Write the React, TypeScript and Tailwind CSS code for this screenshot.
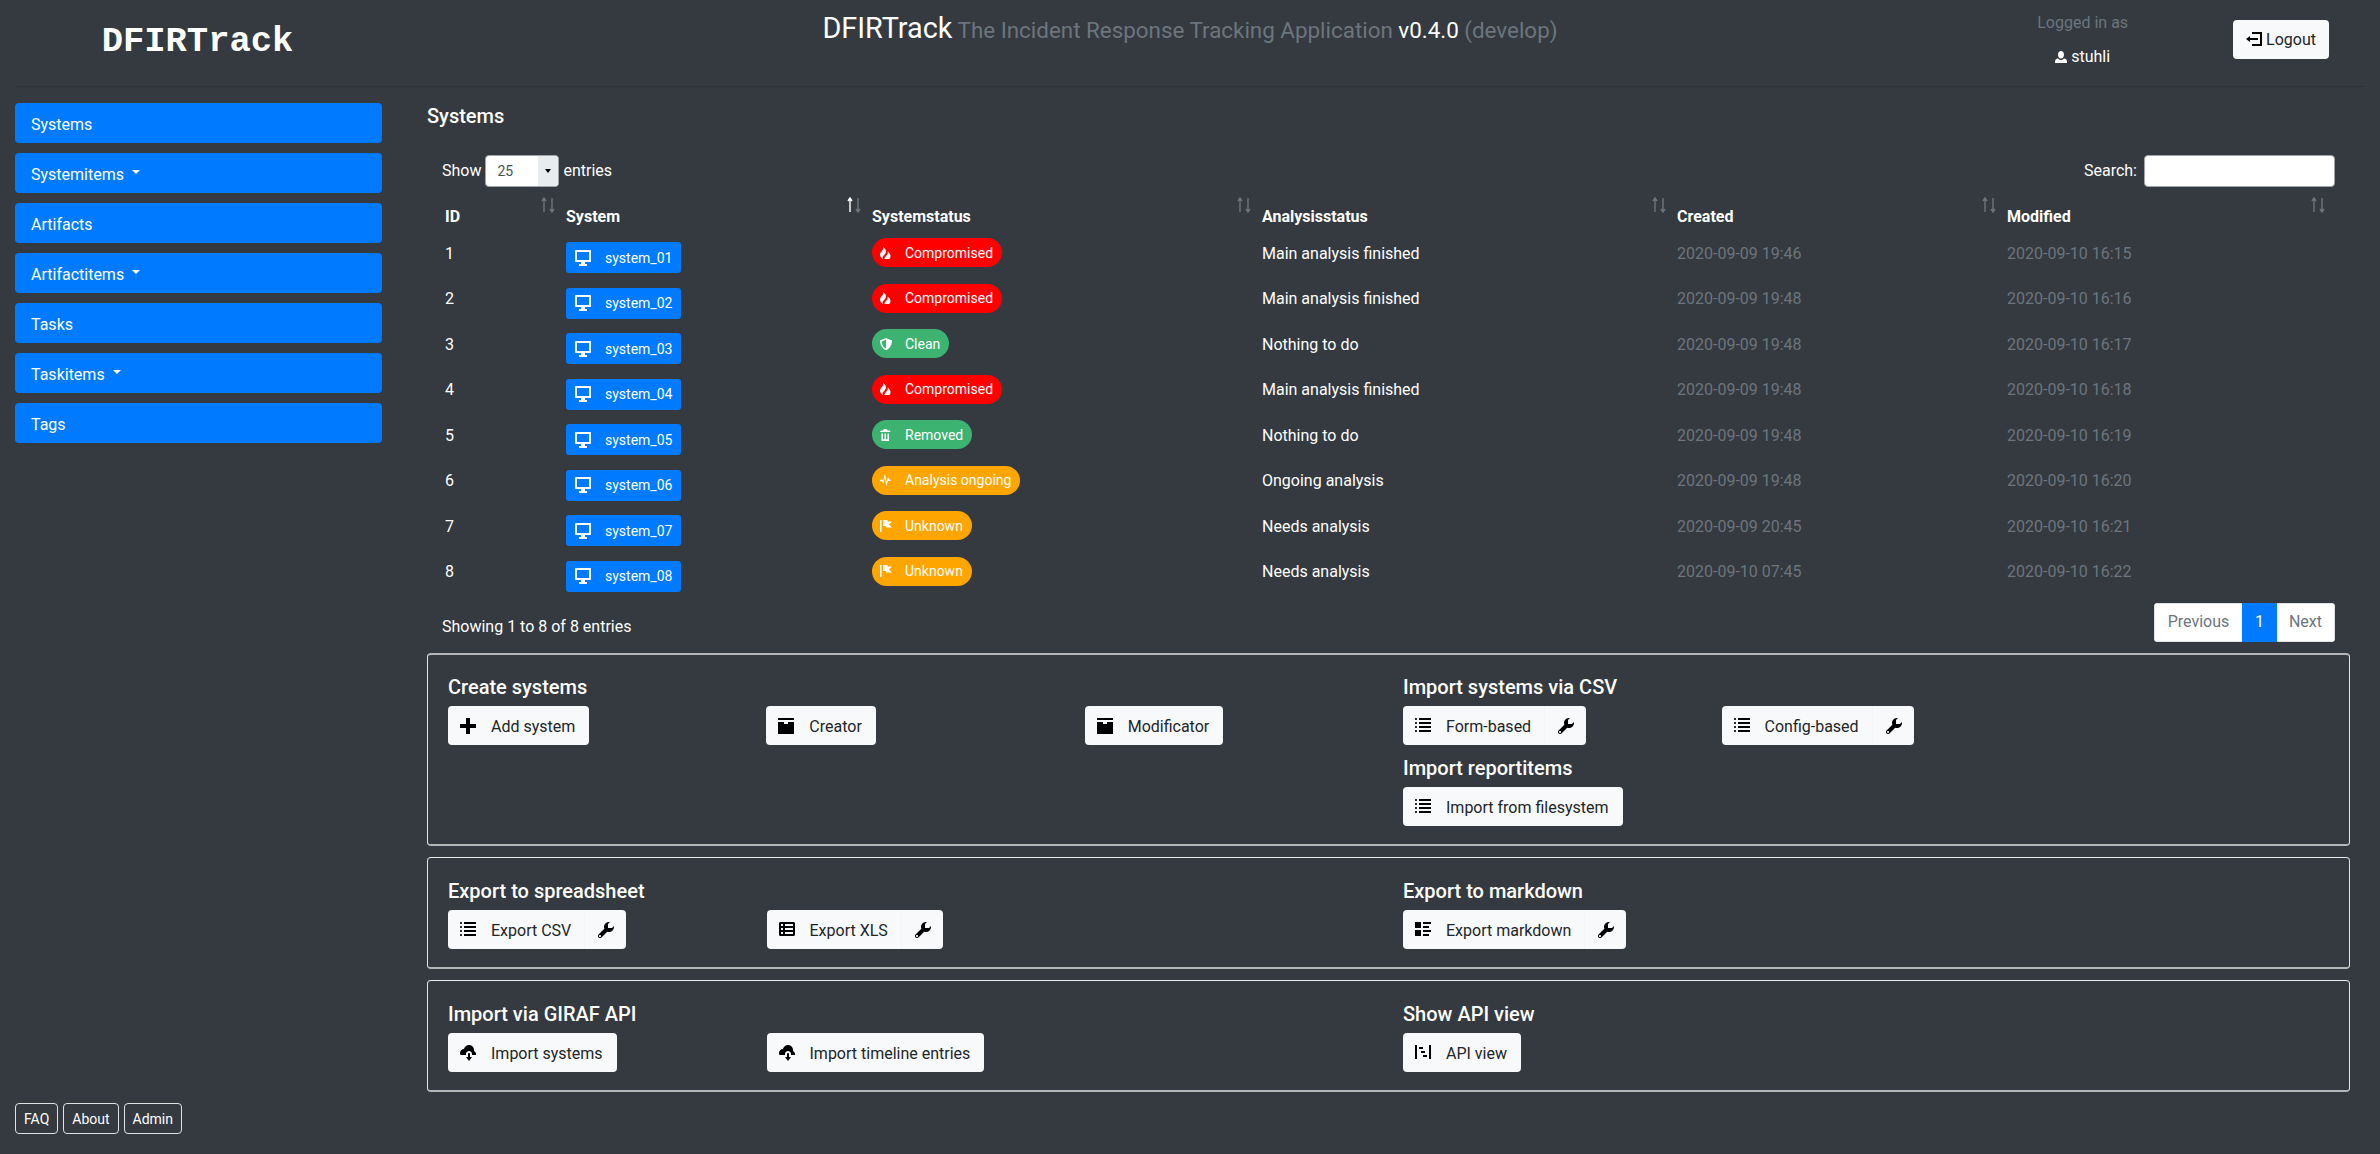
import type { ReactNode } from 'react';

const icons = {
    monitor: 'M.5 0C.22 0 0 .22 0 .5v5c0 .28.22.5.5.5H3v1H2v1h4V7H5V6h2.5c.28 0 .5-.22.5-.5v-5C8 .22 7.78 0 7.5 0h-7zM1 1h6v4H1V1z',
    fire: 'M2 0c1 2-2 3-2 5s2 3 2 3c-.98-1.98 2-3 2-5s-2-3-2-3zm3 3c1 2-2 3-2 5h3c.4 0 1-.5 1-2 0-2-2-3-2-3z',
    shield: 'M4 0l-.19.09-3.5 1.47-.31.13v.31c0 1.66.67 3.12 1.47 4.19.4.53.83.97 1.25 1.28.42.31.83.53 1.28.53.46 0 .86-.22 1.28-.53.42-.31.85-.75 1.25-1.28.8-1.07 1.47-2.53 1.47-4.19v-.31l-.31-.13-3.5-1.47-.19-.09zm0 1.09v5.91c-.04 0-.33-.07-.66-.31s-.71-.63-1.06-1.09c-.64-.85-1.14-2.03-1.22-3.28l2.94-1.22z',
    trash: 'M3 0c-.55 0-1 .45-1 1h-1c-.55 0-1 .45-1 1h7c0-.55-.45-1-1-1h-1c0-.55-.45-1-1-1h-1zm-2 3v4.81c0 .11.08.19.19.19h4.63c.11 0 .19-.08.19-.19v-4.81h-1v3.5c0 .28-.22.5-.5.5s-.5-.22-.5-.5v-3.5h-1v3.5c0 .28-.22.5-.5.5s-.5-.22-.5-.5v-3.5h-1z',
    pulse: 'M3.25 0l-.47 1.53-.78 2.56-.03-.06-.09-.19h-1.88v1h1.31l.28.56.56 1.06.31-1.16.69-2.34.75 3.5.38 1.66.47-1.63.63-2.09.13.19h1.5v-1h-.91l-.25-.56-.53-1.06-.34 1.16-.56 2.03-.75-3.56-.41-1.59z',
    flag: 'M0 0v8h1v-8h-1zm2 0v4h2v1h4l-2-1.97 2-2.03h-3v-1h-3z',
    person: 'M4 0c-1.1 0-2 1.12-2 2.5s.9 2.5 2 2.5 2-1.12 2-2.5-.9-2.5-2-2.5zm-2.09 5c-1.06.05-1.91.92-1.91 2v1h8v-1c0-1.08-.84-1.95-1.91-2-.54.61-1.28 1-2.09 1-.81 0-1.55-.39-2.09-1z',
    logout: 'M3 0v1h4v5h-4v1h5v-7h-5zm-1 2l-2 1.5 2 1.5v-1h4v-1h-4v-1z',
    plus: 'M3 0v3h-3v2h3v3h2v-3h3v-2h-3v-3h-2z',
    box: 'M0 0v1h8v-1h-8zm0 2v5.91c0 .05.04.09.09.09h7.81c.05 0 .09-.04.09-.09v-5.91h-2.97v1.03h-2v-1.03h-3.03z',
    wrench: 'M5.5 0c-1.38 0-2.5 1.12-2.5 2.5 0 .32.08.62.19.91l-2.91 2.88c-.39.39-.39 1.05 0 1.44.2.2.46.28.72.28.26 0 .52-.09.72-.28l2.88-2.91c.28.11.58.19.91.19 1.38 0 2.5-1.12 2.5-2.5 0-.16 0-.32-.03-.47l-.97.97h-2v-2l.97-.97c-.15-.03-.31-.03-.47-.03zm-4.5 6.5c.28 0 .5.22.5.5s-.22.5-.5.5-.5-.22-.5-.5.22-.5.5-.5z',
    list: 'M.5 0c-.28 0-.5.23-.5.5s.22.5.5.5.5-.23.5-.5-.22-.5-.5-.5zm1.5 0v1h6v-1h-6zm-1.5 2c-.28 0-.5.23-.5.5s.22.5.5.5.5-.23.5-.5-.22-.5-.5-.5zm1.5 0v1h6v-1h-6zm-1.5 2c-.28 0-.5.23-.5.5s.22.5.5.5.5-.23.5-.5-.22-.5-.5-.5zm1.5 0v1h6v-1h-6zm-1.5 2c-.28 0-.5.23-.5.5s.22.5.5.5.5-.23.5-.5-.22-.5-.5-.5zm1.5 0v1h6v-1h-6z',
    spreadsheet: 'M.75 0c-.41 0-.75.34-.75.75v5.5c0 .41.34.75.75.75h6.5c.41 0 .75-.34.75-.75v-5.5c0-.41-.34-.75-.75-.75h-6.5zm.25 1h1v1h-1v-1zm2 0h4v1h-4v-1zm-2 2h1v1h-1v-1zm2 0h4v1h-4v-1zm-2 2h1v1h-1v-1zm2 0h4v1h-4v-1z',
    listRich: 'M0 0v3h3v-3h-3zm4 0v1h4v-1h-4zm0 2v1h3v-1h-3zm-4 2v3h3v-3h-3zm4 0v1h4v-1h-4zm0 2v1h3v-1h-3z',
    cloudDownload: 'M4.5 0c-1.21 0-2.27.86-2.5 2-1.1 0-2 .9-2 2 0 .37.11.71.28 1h2.72v-.5c0-.83.67-1.5 1.5-1.5s1.5.67 1.5 1.5v.5h1.91c.06-.16.09-.32.09-.5 0-.65-.42-1.29-1-1.5v-.5c0-1.38-1.12-2.5-2.5-2.5zm0 4c-.28 0-.5.22-.5.5v1.5h-1l1.5 2 1.5-2h-1v-1.5c0-.28-.22-.5-.5-.5z',
    project: 'M0 0v7h1v-7h-1zm7 0v7h1v-7h-1zm-5 1v1h2v-1h-2zm1 2v1h2v-1h-2zm1 2v1h2v-1h-2z',
};

type IconName = keyof typeof icons;

function Icon({ name, className }: { name: IconName; className: string }) {
    return (
        <svg viewBox="0 0 8 8" className={className} fill="currentColor">
            <path d={icons[name]} />
        </svg>
    );
}

const statuses = {
    compromised: { label: 'Compromised', icon: 'fire', color: 'bg-[#ff0000]' },
    clean: { label: 'Clean', icon: 'shield', color: 'bg-[#3cb371]' },
    removed: { label: 'Removed', icon: 'trash', color: 'bg-[#3cb371]' },
    ongoing: { label: 'Analysis ongoing', icon: 'pulse', color: 'bg-[#ffa500]' },
    unknown: { label: 'Unknown', icon: 'flag', color: 'bg-[#ffa500]' },
} as const;

const rows = [
    { id: 1, name: 'system_01', status: 'compromised', analysis: 'Main analysis finished', created: '2020-09-09 19:46', modified: '2020-09-10 16:15' },
    { id: 2, name: 'system_02', status: 'compromised', analysis: 'Main analysis finished', created: '2020-09-09 19:48', modified: '2020-09-10 16:16' },
    { id: 3, name: 'system_03', status: 'clean', analysis: 'Nothing to do', created: '2020-09-09 19:48', modified: '2020-09-10 16:17' },
    { id: 4, name: 'system_04', status: 'compromised', analysis: 'Main analysis finished', created: '2020-09-09 19:48', modified: '2020-09-10 16:18' },
    { id: 5, name: 'system_05', status: 'removed', analysis: 'Nothing to do', created: '2020-09-09 19:48', modified: '2020-09-10 16:19' },
    { id: 6, name: 'system_06', status: 'ongoing', analysis: 'Ongoing analysis', created: '2020-09-09 19:48', modified: '2020-09-10 16:20' },
    { id: 7, name: 'system_07', status: 'unknown', analysis: 'Needs analysis', created: '2020-09-09 20:45', modified: '2020-09-10 16:21' },
    { id: 8, name: 'system_08', status: 'unknown', analysis: 'Needs analysis', created: '2020-09-10 07:45', modified: '2020-09-10 16:22' },
] as const;

const columns = ['ID', 'System', 'Systemstatus', 'Analysisstatus', 'Created', 'Modified'];
const gridCols = 'grid grid-cols-[121px_306px_390px_415px_330px_329px]';

const sidebar = [
    { label: 'Systems' },
    { label: 'Systemitems', caret: true },
    { label: 'Artifacts' },
    { label: 'Artifactitems', caret: true },
    { label: 'Tasks' },
    { label: 'Taskitems', caret: true },
    { label: 'Tags' },
];

function SortArrows({ active }: { active?: boolean }) {
    return (
        <svg viewBox="0 0 14 16" className="absolute right-[11px] bottom-[16px] h-[16px] w-[14px] text-[#6c757d]" fill="none" stroke="currentColor" strokeWidth="1.4">
            <path d="M3 15V2M1 4l2-3 2 3" stroke={active ? '#ffffff' : 'currentColor'} />
            <path d="M11 1v13M9 12l2 3 2-3" />
        </svg>
    );
}

function ActionButton({ icon, label, split }: { icon: IconName; label: string; split?: boolean }) {
    return (
        <div className="inline-flex h-[39px] items-center rounded-[4px] bg-[#f8f9fa] text-[#212529]">
            <div className={`flex items-center pl-[12px] ${split ? 'pr-[13px]' : 'pr-[14px]'}`}>
                <Icon name={icon} className="mr-[15px] h-[16px] w-[16px] text-black" />
                <span className="pt-[2px]">{label}</span>
            </div>
            {split && (
                <div className="flex h-full items-center border-l border-[#f4f5f6] pr-[12px] pl-[13px]">
                    <Icon name="wrench" className="h-[16px] w-[16px] text-black" />
                </div>
            )}
        </div>
    );
}

function Section({ title, className, children }: { title: string; className?: string; children: ReactNode }) {
    return (
        <div className={className}>
            <h5 className="h-[34px] text-[20px] leading-[30px] font-medium text-white">{title}</h5>
            <div className="flex">{children}</div>
        </div>
    );
}

function Slot({ children }: { children: ReactNode }) {
    return <div className="w-[318.5px]">{children}</div>;
}

function Box({ left, right, first }: { left: ReactNode; right: ReactNode; first?: boolean }) {
    return (
        <div
            className={`grid grid-cols-[955px_1fr] rounded-[4px] border border-b-2 border-x-[#e2e4e6] border-b-[#b4b6b8] pb-[18px] pl-[20px] ${
                first ? 'border-t-2 border-t-[#b4b6b8] pt-[17px]' : 'border-t-[#e8eaec] pt-[18px]'
            }`}
        >
            <div>{left}</div>
            <div>{right}</div>
        </div>
    );
}

export default function App() {
    return (
        <div className="flex h-[1154px] flex-col overflow-hidden bg-[#343a40] font-[Roboto,sans-serif] text-[16px] leading-[24px] text-white">
            <header className="mx-[15px] grid h-[87px] shrink-0 grid-cols-[1fr_auto_1fr] border-b border-[#2e3338]">
                <div className="w-[365px] pt-[22px] text-center font-['Liberation_Mono',monospace] text-[35.5px] leading-[40px] font-bold">DFIRTrack</div>
                <div className="pt-[8px] text-[22.4px] leading-[40px] whitespace-nowrap">
                    <span className="text-[28.8px] font-normal">DFIRTrack</span>
                    <span className="text-[#6c757d]"> The Incident Response Tracking Application </span>
                    <span>v0.4.0</span>
                    <span className="text-[#6c757d]"> (develop)</span>
                </div>
                <div className="flex justify-end pr-[36px]">
                    <div className="mr-[105px] flex flex-col items-center pt-[11px]">
                        <span className="text-[#6c757d]">Logged in as</span>
                        <span className="mt-[10px] flex items-center">
                            <Icon name="person" className="mr-[4px] h-[12px] w-[12px]" />
                            stuhli
                        </span>
                    </div>
                    <div className="mt-[20px] flex h-[39px] items-center rounded-[4px] bg-[#f8f9fa] px-[13px] text-[#212529]">
                        <Icon name="logout" className="mr-[4px] h-[16px] w-[16px] text-black" />
                        Logout
                    </div>
                </div>
            </header>

            <div className="flex min-h-0 flex-1">
                <aside className="ml-[15px] flex w-[367px] shrink-0 flex-col justify-between pt-[16px] pb-[20px]">
                    <nav className="flex flex-col gap-[10px]">
                        {sidebar.map((item) => (
                            <div key={item.label} className="flex h-[40px] items-center rounded-[4px] bg-[#007bff] px-[16px] pt-[3px]">
                                {item.label}
                                {item.caret && <span className="mt-[-5px] ml-[8px] border-x-[4px] border-t-[4px] border-x-transparent border-t-white" />}
                            </div>
                        ))}
                    </nav>
                    <div className="flex gap-[5px] text-[14px]">
                        {['FAQ', 'About', 'Admin'].map((label) => (
                            <div key={label} className="flex h-[31px] items-center rounded-[4px] border border-[#dfe1e3] px-[8px]">
                                {label}
                            </div>
                        ))}
                    </div>
                </aside>

                <main className="ml-[45px] w-[1923px] pt-[14px]">
                    <h5 className="h-[54px] text-[20px] leading-[30px] font-medium">Systems</h5>

                    <div className="flex h-[32px] items-center justify-between pr-[15px] pl-[15px]">
                        <div className="flex items-center">
                            Show
                            <div className="mx-[4px] flex h-[32px] w-[74px] items-stretch overflow-hidden rounded-[4px] border border-[#a0a5aa] bg-white text-[14px] text-[#495057]">
                                <span className="flex-1 pl-[11px] leading-[30px]">25</span>
                                <span className="flex w-[20px] items-center justify-center bg-[#e9ecef]">
                                    <span className="border-x-[3px] border-t-[4px] border-x-transparent border-t-black" />
                                </span>
                            </div>
                            entries
                        </div>
                        <div className="flex items-center">
                            Search:
                            <div className="ml-[7px] h-[32px] w-[191px] rounded-[4px] border border-[#a0a5aa] bg-white" />
                        </div>
                    </div>

                    <div className="ml-[18px]">
                        <div className={`${gridCols} h-[43px] items-end pb-[1px] font-bold`}>
                            {columns.map((col) => (
                                <div key={col} className="relative">
                                    {col}
                                    <SortArrows active={col === 'System'} />
                                </div>
                            ))}
                        </div>
                        {rows.map((row) => {
                            const status = statuses[row.status];
                            return (
                                <div key={row.id} className={`${gridCols} h-[45.5px]`}>
                                    <div className="pt-[11.5px]">{row.id}</div>
                                    <div className="pt-[12px]">
                                        <div className="inline-flex h-[31px] items-center rounded-[3px] bg-[#007bff] pr-[9px] pl-[9px] text-[14px]">
                                            <Icon name="monitor" className="mr-[14px] h-[16px] w-[16px]" />
                                            {row.name}
                                        </div>
                                    </div>
                                    <div className="pt-[8px]">
                                        <div className={`inline-flex h-[29px] items-center rounded-full pr-[9px] pl-[8px] text-[14px] ${status.color}`}>
                                            <Icon name={status.icon} className="mr-[13px] h-[12px] w-[12px]" />
                                            {status.label}
                                        </div>
                                    </div>
                                    <div className="pt-[11.5px]">{row.analysis}</div>
                                    <div className="pt-[11.5px] text-[#6c757d]">{row.created}</div>
                                    <div className="pt-[11.5px] text-[#6c757d]">{row.modified}</div>
                                </div>
                            );
                        })}
                    </div>

                    <div className="mt-[9px] flex h-[38px] items-center justify-between pr-[15px] pl-[15px]">
                        <span className="pt-[10px]">Showing 1 to 8 of 8 entries</span>
                        <div className="flex h-[39px] overflow-hidden rounded-[4px] bg-white text-[#6c757d]">
                            <span className="flex w-[88px] items-center justify-center border border-r-0 border-[#dee2e6]">Previous</span>
                            <span className="flex w-[35px] items-center justify-center bg-[#007bff] text-white">1</span>
                            <span className="flex w-[58px] items-center justify-center border border-l-0 border-[#dee2e6]">Next</span>
                        </div>
                    </div>

                    <div className="mt-[12px] flex flex-col gap-[11px]">
                        <Box
                            first
                            left={
                                <Section title="Create systems">
                                    <Slot><ActionButton icon="plus" label="Add system" /></Slot>
                                    <Slot><ActionButton icon="box" label="Creator" /></Slot>
                                    <Slot><ActionButton icon="box" label="Modificator" /></Slot>
                                </Section>
                            }
                            right={
                                <>
                                    <Section title="Import systems via CSV">
                                        <Slot><ActionButton icon="list" label="Form-based" split /></Slot>
                                        <Slot><ActionButton icon="list" label="Config-based" split /></Slot>
                                    </Section>
                                    <Section title="Import reportitems" className="mt-[8px]">
                                        <Slot><ActionButton icon="list" label="Import from filesystem" /></Slot>
                                    </Section>
                                </>
                            }
                        />
                        <Box
                            left={
                                <Section title="Export to spreadsheet">
                                    <Slot><ActionButton icon="list" label="Export CSV" split /></Slot>
                                    <Slot><ActionButton icon="spreadsheet" label="Export XLS" split /></Slot>
                                </Section>
                            }
                            right={
                                <Section title="Export to markdown">
                                    <Slot><ActionButton icon="listRich" label="Export markdown" split /></Slot>
                                </Section>
                            }
                        />
                        <Box
                            left={
                                <Section title="Import via GIRAF API">
                                    <Slot><ActionButton icon="cloudDownload" label="Import systems" /></Slot>
                                    <Slot><ActionButton icon="cloudDownload" label="Import timeline entries" /></Slot>
                                </Section>
                            }
                            right={
                                <Section title="Show API view">
                                    <Slot><ActionButton icon="project" label="API view" /></Slot>
                                </Section>
                            }
                        />
                    </div>
                </main>
            </div>
        </div>
    );
}
